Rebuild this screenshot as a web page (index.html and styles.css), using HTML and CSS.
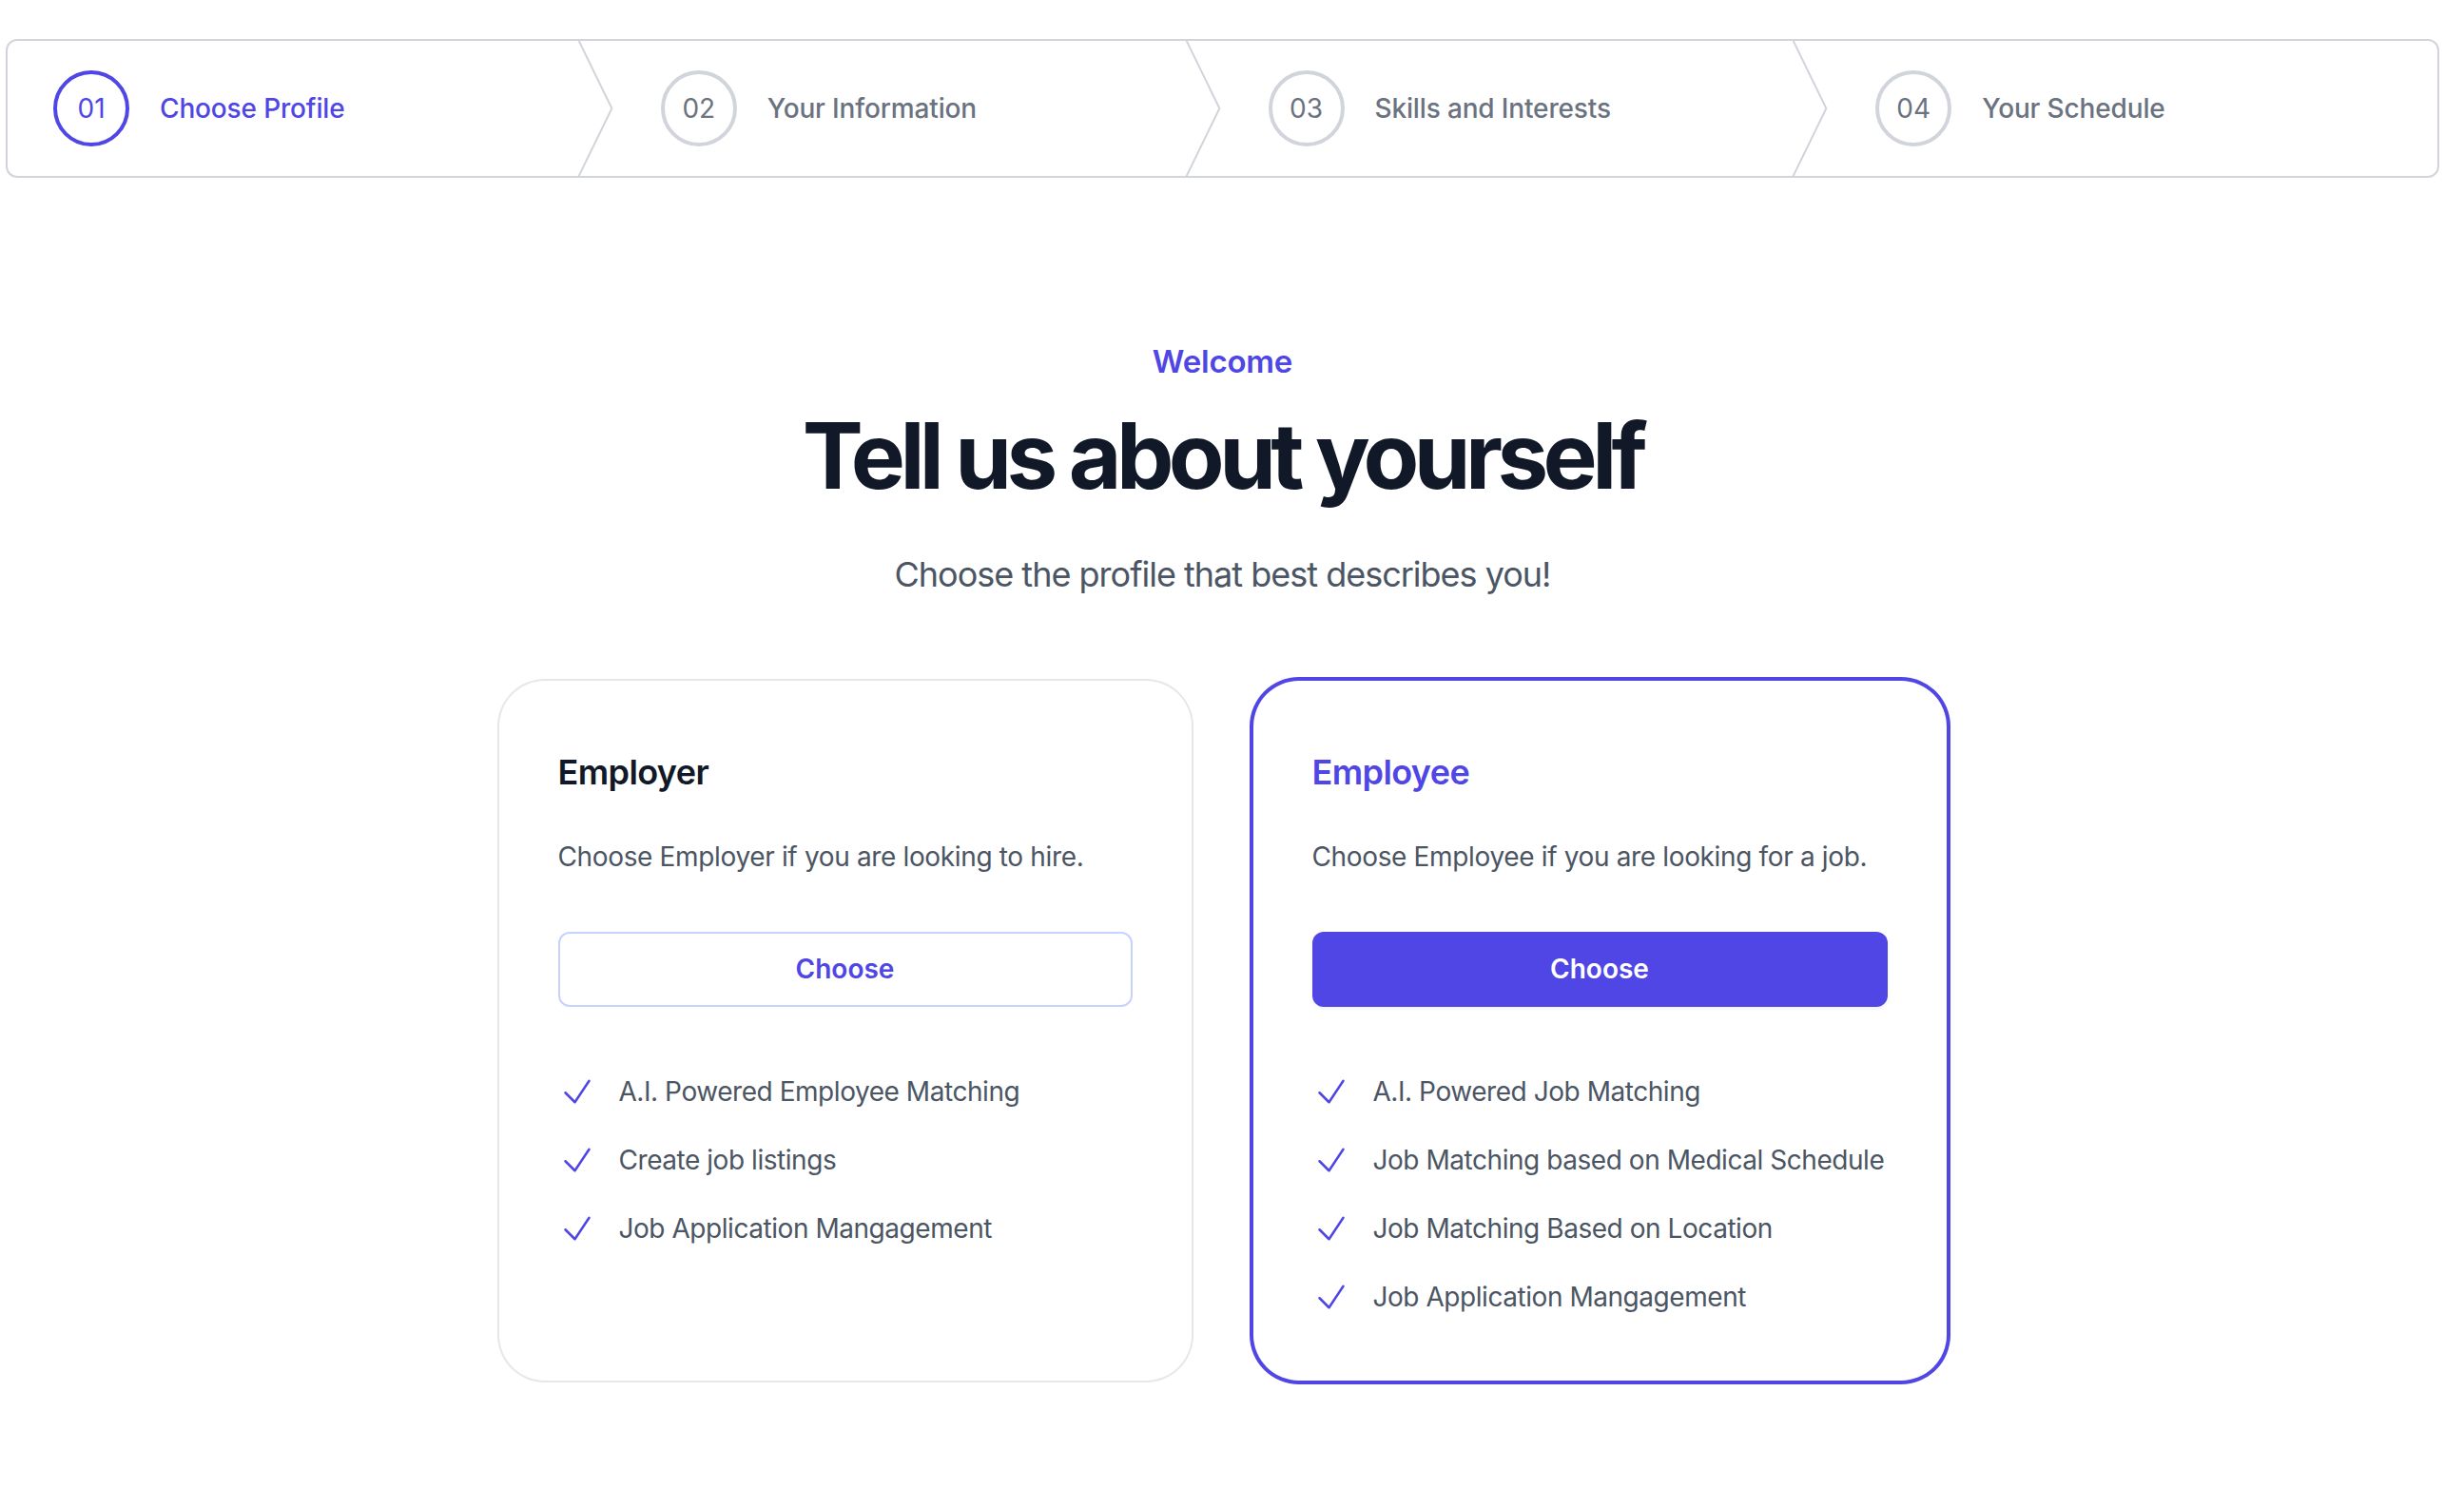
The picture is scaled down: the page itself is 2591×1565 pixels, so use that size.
FILE: index.html
```html
<!DOCTYPE html>
<html lang="en">
<head>
<meta charset="utf-8">
<title>Tell us about yourself</title>
<link rel="stylesheet" href="styles.css">
</head>
<body>
<div class="page">
  <nav class="steps" aria-label="Progress">
    <div class="step step-current">
      <span class="step-circle">01</span>
      <span class="step-label">Choose Profile</span>
      <svg class="chevron" viewBox="0 0 22 80" fill="none" preserveAspectRatio="none" aria-hidden="true"><path d="M0 -2L20 40L0 82" vector-effect="non-scaling-stroke" stroke="currentColor" stroke-width="2" stroke-linejoin="round"/></svg>
    </div>
    <div class="step">
      <span class="step-circle">02</span>
      <span class="step-label">Your Information</span>
      <svg class="chevron" viewBox="0 0 22 80" fill="none" preserveAspectRatio="none" aria-hidden="true"><path d="M0 -2L20 40L0 82" vector-effect="non-scaling-stroke" stroke="currentColor" stroke-width="2" stroke-linejoin="round"/></svg>
    </div>
    <div class="step">
      <span class="step-circle">03</span>
      <span class="step-label">Skills and Interests</span>
      <svg class="chevron" viewBox="0 0 22 80" fill="none" preserveAspectRatio="none" aria-hidden="true"><path d="M0 -2L20 40L0 82" vector-effect="non-scaling-stroke" stroke="currentColor" stroke-width="2" stroke-linejoin="round"/></svg>
    </div>
    <div class="step">
      <span class="step-circle">04</span>
      <span class="step-label">Your Schedule</span>
    </div>
  </nav>

  <header class="hero">
    <p class="eyebrow">Welcome</p>
    <h1 class="title">Tell us about yourself</h1>
    <p class="subtitle">Choose the profile that best describes you!</p>
  </header>

  <section class="cards">
    <div class="card">
      <h3 class="card-title">Employer</h3>
      <p class="card-desc">Choose Employer if you are looking to hire.</p>
      <a class="btn btn-outline" href="#">Choose</a>
      <ul class="features">
        <li><svg class="check" viewBox="0 0 24 24" fill="none" stroke="currentColor" stroke-width="1.5" aria-hidden="true"><path stroke-linecap="round" stroke-linejoin="round" d="M4.5 12.75l6 6 9-13.5"/></svg>A.I. Powered Employee Matching</li>
        <li><svg class="check" viewBox="0 0 24 24" fill="none" stroke="currentColor" stroke-width="1.5" aria-hidden="true"><path stroke-linecap="round" stroke-linejoin="round" d="M4.5 12.75l6 6 9-13.5"/></svg>Create job listings</li>
        <li><svg class="check" viewBox="0 0 24 24" fill="none" stroke="currentColor" stroke-width="1.5" aria-hidden="true"><path stroke-linecap="round" stroke-linejoin="round" d="M4.5 12.75l6 6 9-13.5"/></svg>Job Application Mangagement</li>
      </ul>
    </div>
    <div class="card card-selected">
      <h3 class="card-title">Employee</h3>
      <p class="card-desc">Choose Employee if you are looking for a job.</p>
      <a class="btn btn-primary" href="#">Choose</a>
      <ul class="features">
        <li><svg class="check" viewBox="0 0 24 24" fill="none" stroke="currentColor" stroke-width="1.5" aria-hidden="true"><path stroke-linecap="round" stroke-linejoin="round" d="M4.5 12.75l6 6 9-13.5"/></svg>A.I. Powered Job Matching</li>
        <li><svg class="check" viewBox="0 0 24 24" fill="none" stroke="currentColor" stroke-width="1.5" aria-hidden="true"><path stroke-linecap="round" stroke-linejoin="round" d="M4.5 12.75l6 6 9-13.5"/></svg>Job Matching based on Medical Schedule</li>
        <li><svg class="check" viewBox="0 0 24 24" fill="none" stroke="currentColor" stroke-width="1.5" aria-hidden="true"><path stroke-linecap="round" stroke-linejoin="round" d="M4.5 12.75l6 6 9-13.5"/></svg>Job Matching Based on Location</li>
        <li><svg class="check" viewBox="0 0 24 24" fill="none" stroke="currentColor" stroke-width="1.5" aria-hidden="true"><path stroke-linecap="round" stroke-linejoin="round" d="M4.5 12.75l6 6 9-13.5"/></svg>Job Application Mangagement</li>
      </ul>
    </div>
  </section>
</div>
</body>
</html>
```

FILE: styles.css
```css
* {
  box-sizing: border-box;
}

html, body {
  margin: 0;
  padding: 0;
  background: #ffffff;
}

body {
  font-family: Inter, "Noto Sans", "Liberation Sans", sans-serif;
  color: #111827;
}

.page {
  padding: 41px 26px 0 6px;
}

/* Stepper */
.steps {
  display: flex;
  border: 2px solid #d1d5db;
  border-radius: 12px;
}

.step {
  position: relative;
  flex: 1 1 0;
  display: flex;
  align-items: center;
  padding: 31px 48px;
}

.step-circle {
  flex: none;
  width: 80px;
  height: 80px;
  border: 4px solid #d1d5db;
  border-radius: 50%;
  display: flex;
  align-items: center;
  justify-content: center;
  font-size: 28px;
  line-height: 40px;
  font-weight: 400;
  color: #6b7280;
}

.step-label {
  margin-left: 32px;
  font-size: 28px;
  line-height: 40px;
  font-weight: 500;
  letter-spacing: -0.15px;
  color: #6b7280;
}

.step-current .step-circle {
  border-color: #4f46e5;
  color: #4f46e5;
}

.step-current .step-label {
  color: #4f46e5;
}

.chevron {
  position: absolute;
  right: 0;
  top: 0;
  width: 40px;
  height: 100%;
  color: #d1d5db;
}

/* Hero */
.hero {
  text-align: center;
  margin-top: 165px;
}

.eyebrow {
  margin: 0;
  font-size: 33px;
  line-height: 56px;
  font-weight: 600;
  letter-spacing: -0.2px;
  color: #4f46e5;
}

.title {
  margin: 23px 0 0;
  font-size: 96px;
  line-height: 96px;
  font-weight: 700;
  letter-spacing: -5.6px;
  color: #111827;
}

.subtitle {
  margin: 45px 0 0;
  font-size: 36px;
  line-height: 64px;
  letter-spacing: -1px;
  color: #4b5563;
}

/* Cards */
.cards {
  display: grid;
  grid-template-columns: 728px 729px;
  column-gap: 65px;
  justify-content: center;
  margin-top: 80px;
  padding-bottom: 80px;
}

.card {
  border-radius: 48px;
  padding: 64px 62px;
  box-shadow: 0 0 0 2px #e5e7eb;
  background: #ffffff;
}

.card-selected {
  box-shadow: 0 0 0 4px #4f46e5;
}

.card-title {
  margin: 0;
  font-size: 36px;
  line-height: 64px;
  font-weight: 600;
  letter-spacing: -0.6px;
  color: #111827;
}

.card-selected .card-title {
  color: #4f46e5;
}

.card-desc {
  margin: 33px 0 0;
  font-size: 28px;
  line-height: 48px;
  letter-spacing: -0.35px;
  color: #4b5563;
}

.btn {
  display: block;
  margin-top: 55px;
  height: 79px;
  border-radius: 12px;
  font-size: 28px;
  line-height: 79px;
  font-weight: 600;
  text-align: center;
  text-decoration: none;
}

.btn-outline {
  color: #4f46e5;
  box-shadow: inset 0 0 0 2px #c7d2fe;
}

.btn-primary {
  color: #ffffff;
  background: #4f46e5;
  box-shadow: 0 2px 4px rgba(0, 0, 0, 0.06);
}

.features {
  list-style: none;
  margin: 65px 0 0;
  padding: 0;
  display: flex;
  flex-direction: column;
  row-gap: 24px;
}

.features li {
  display: flex;
  column-gap: 24px;
  font-size: 28px;
  line-height: 48px;
  letter-spacing: -0.45px;
  white-space: nowrap;
  color: #4b5563;
}

.check {
  flex: none;
  width: 40px;
  height: 48px;
  color: #4f46e5;
}
```
